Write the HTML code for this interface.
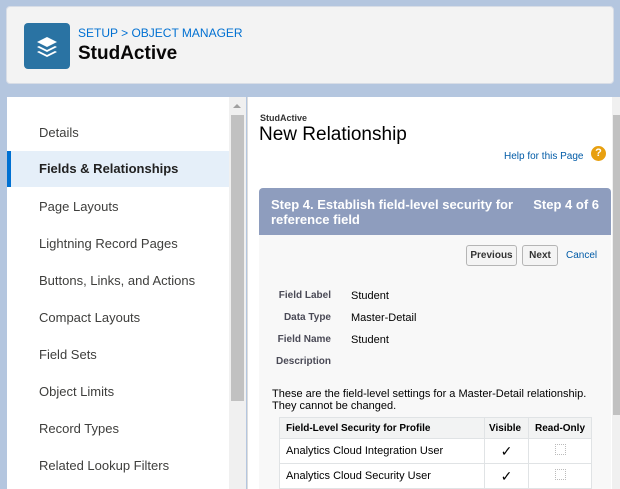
<!DOCTYPE html>
<html><head><meta charset="utf-8"><style>
*{margin:0;padding:0;box-sizing:border-box}
body{width:620px;height:489px;overflow:hidden;background:#b4c6df;font-family:"Liberation Sans",Arial,sans-serif;position:relative}
.hdr{position:absolute;left:6px;top:6px;width:608px;height:78px;background:#f3f3f3;border-radius:4px;border:1px solid #d8dde6}
.icon{position:absolute;left:17px;top:16px;width:46px;height:46px;background:#2a73a3;border-radius:4px}
.bc{position:absolute;left:71px;top:19px;font-size:12px;color:#0070d2}
.title{position:absolute;left:71px;top:36px;font-size:19px;font-weight:bold;color:#080707}
.left{position:absolute;left:7px;top:97px;width:222px;height:392px;background:#fff}
.nav{position:absolute;left:0;width:222px;height:36px;line-height:36px;padding-left:32px;font-size:13px;color:#3e3e3c}
.sel{background:#e5eff9;font-weight:bold;border-left:4px solid #0070d2;padding-left:28px;color:#222}
.sb{position:absolute;left:229px;top:97px;width:17px;height:392px;background:#f0f0f0}
.thumb{position:absolute;left:2px;top:18px;width:13px;height:286px;background:#c1c1c1}
.right{position:absolute;left:247px;top:97px;width:365px;height:392px;background:#fff;border-left:1px solid #ddd}
.sb2{position:absolute;left:612px;top:97px;width:8px;height:392px;background:#f0f0f0}
.sb2 div{position:absolute;left:1px;top:18px;width:7px;height:300px;background:#c1c1c1}
.step{position:absolute;left:259px;top:188px;width:352px;height:301px;background:#f8f8f8;border-radius:4px 4px 0 0}
.sh{height:47px;background:#8e9dbe;border-radius:4px 4px 0 0;color:#fff;font-weight:bold;font-size:13px;padding:9px 12px;position:relative;line-height:15px}
.btn{position:absolute;top:245px;height:21px;border:1px solid #b5b5b5;border-radius:3px;background:#f4f4f4;font-size:10px;font-weight:bold;color:#333;line-height:19px;text-align:center}
.lab{position:absolute;font-size:10px;font-weight:bold;color:#4a4a56;text-align:right;width:56px;left:275px}
.val{position:absolute;left:351px;font-size:11px;color:#000}
table{position:absolute;left:279px;top:417px;width:313px;border-collapse:collapse;font-size:11px;background:#fff}
td,th{border:1px solid #e0e3e5;height:25px;padding-left:6px;text-align:left}
th{height:21px;background:#f2f3f3;font-size:10px;color:#000}
.cb{display:inline-block;width:11px;height:11px;border:1px dotted #bbb}
</style></head><body>
<div class="hdr">
<div class="icon"><svg width="46" height="46" viewBox="0 0 46 46"><g fill="#fff"><path d="M23 14l-10 5 10 5 10-5z"/><path d="M15 23l8 4 8-4 2 1-10 5-10-5z"/><path d="M15 28l8 4 8-4 2 1-10 5-10-5z"/></g></svg></div>
<div class="bc">SETUP &gt; OBJECT MANAGER</div>
<div class="title">StudActive</div>
</div>
<div class="left">
<div class="nav" style="top:18px">Details</div>
<div class="nav sel" style="top:54px">Fields &amp; Relationships</div>
<div class="nav" style="top:92px">Page Layouts</div>
<div class="nav" style="top:129px">Lightning Record Pages</div>
<div class="nav" style="top:166px">Buttons, Links, and Actions</div>
<div class="nav" style="top:203px">Compact Layouts</div>
<div class="nav" style="top:240px">Field Sets</div>
<div class="nav" style="top:277px">Object Limits</div>
<div class="nav" style="top:314px">Record Types</div>
<div class="nav" style="top:351px">Related Lookup Filters</div>
</div>
<div class="sb"><div style="position:absolute;left:4px;top:7px;border:4px solid transparent;border-bottom:4px solid #a0a0a0;border-top:0"></div><div class="thumb"></div></div>
<div class="right"></div>
<div class="sb2"><div></div></div>
<div style="position:absolute;left:260px;top:113px;font-size:9px;font-weight:bold;color:#333">StudActive</div>
<div style="position:absolute;left:259px;top:124px;font-size:19px;color:#000">New Relationship</div>
<div style="position:absolute;left:504px;top:151px;font-size:10px;color:#015ba7">Help for this Page</div>
<div style="position:absolute;left:591px;top:146px;width:15px;height:15px;border-radius:50%;background:#e8a010;color:#fff;font-size:11px;font-weight:bold;text-align:center;line-height:15px">?</div>
<div class="step"><div class="sh">Step 4. Establish field-level security for<br>reference field<span style="position:absolute;right:12px;top:9px">Step 4 of 6</span></div></div>
<div class="btn" style="left:466px;width:51px">Previous</div>
<div class="btn" style="left:522px;width:36px">Next</div>
<div style="position:absolute;left:566px;top:250px;font-size:10px;color:#015ba7">Cancel</div>
<div class="lab" style="top:290px">Field Label</div><div class="val" style="top:290px">Student</div>
<div class="lab" style="top:312px">Data Type</div><div class="val" style="top:312px">Master-Detail</div>
<div class="lab" style="top:334px">Field Name</div><div class="val" style="top:334px">Student</div>
<div class="lab" style="top:356px">Description</div>
<div style="position:absolute;left:272px;top:388px;font-size:11px;color:#000;line-height:12px">These are the field-level settings for a Master-Detail relationship.<br>They cannot be changed.</div>
<table>
<tr><th style="width:205px">Field-Level Security for Profile</th><th style="width:44px;padding-left:4px">Visible</th><th style="padding-left:6px">Read-Only</th></tr>
<tr><td>Analytics Cloud Integration User</td><td style="text-align:center;padding:0;font-size:14px">✓</td><td style="text-align:center;padding:0"><span class="cb"></span></td></tr>
<tr><td>Analytics Cloud Security User</td><td style="text-align:center;padding:0;font-size:14px">✓</td><td style="text-align:center;padding:0"><span class="cb"></span></td></tr>
</table>
</body></html>
